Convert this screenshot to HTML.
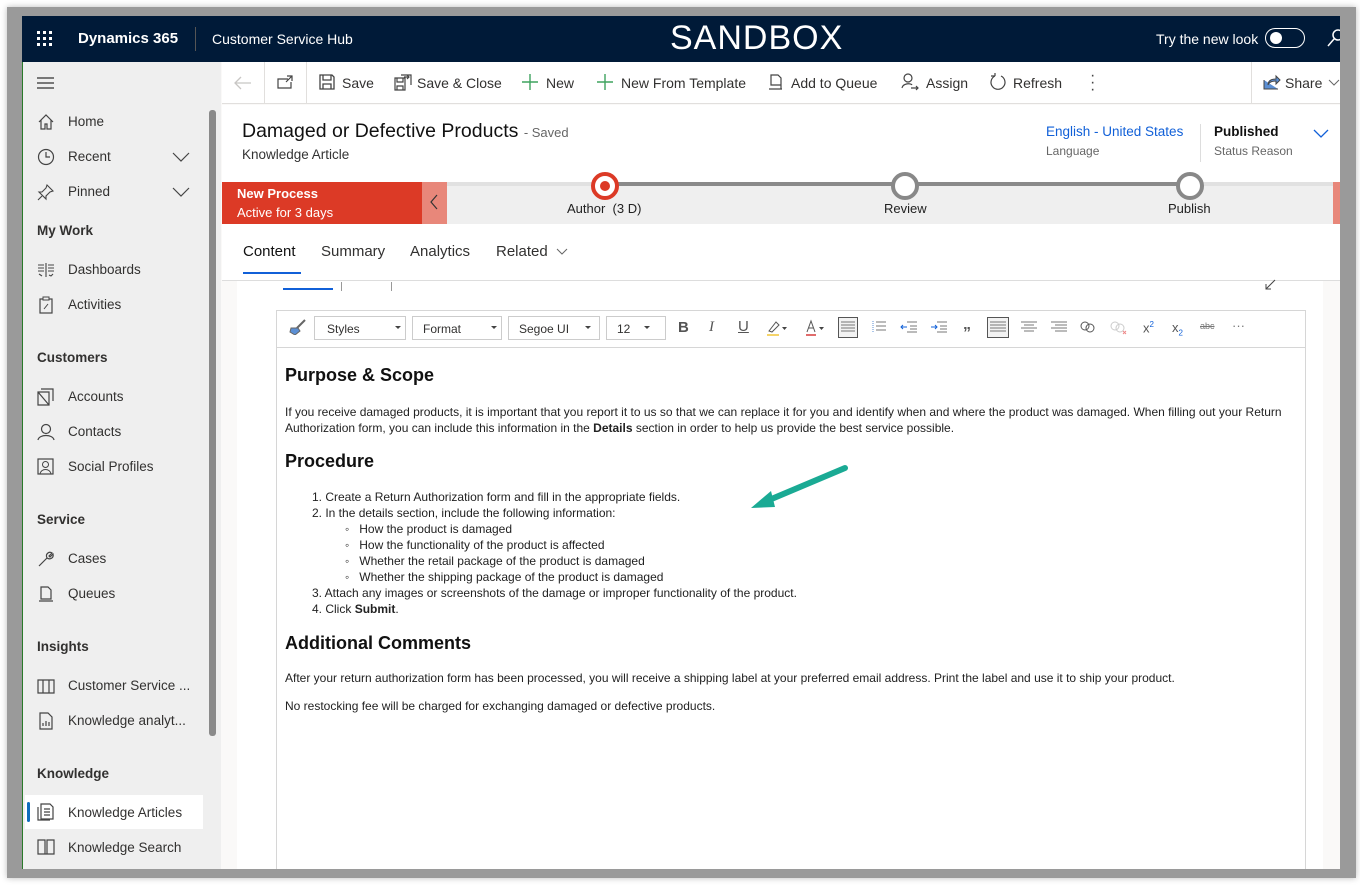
<!DOCTYPE html>
<html><head><meta charset="utf-8"><style>
*{box-sizing:border-box;margin:0;padding:0}
body{width:1360px;height:885px;background:#fff;font-family:"Liberation Sans",sans-serif;position:relative;overflow:hidden;color:#323130}
.a{position:absolute;white-space:nowrap}
.frame{position:absolute;left:7px;top:7px;width:1349px;height:871px;background:#9a9a9a;box-shadow:0 0 6px #bbb}
.app{position:absolute;left:22px;top:16px;width:1318px;height:853px;background:#faf9f8;overflow:hidden}
.top{position:absolute;left:0;top:0;width:1318px;height:46px;background:#001a38;color:#fff}
.side{position:absolute;left:0;top:46px;width:199px;height:807px;background:#efefef;border-left:1px solid #2a7a2a}
.si{position:absolute;left:45px;font-size:13.5px;color:#323130}
.sh{position:absolute;left:14px;font-size:13.5px;font-weight:bold;color:#323130}
.ic{position:absolute;left:14px;width:18px;height:18px}
.cmd{position:absolute;left:200px;top:46px;width:1118px;height:42px;background:#fff;border-bottom:1px solid #e1dfdd}
.cb{position:absolute;top:13px;font-size:14px;color:#323130}
.body{font-size:12px;color:#222}
</style></head><body>
<div class="frame"></div>
<div class="app">
 <div class="top">
  <svg class="a" style="left:15px;top:15px" width="16" height="16"><g fill="#fff"><rect x="0" y="0" width="3" height="3"/><rect x="6" y="0" width="3" height="3"/><rect x="12" y="0" width="3" height="3"/><rect x="0" y="6" width="3" height="3"/><rect x="6" y="6" width="3" height="3"/><rect x="12" y="6" width="3" height="3"/><rect x="0" y="12" width="3" height="3"/><rect x="6" y="12" width="3" height="3"/><rect x="12" y="12" width="3" height="3"/></g></svg>
  <div class="a" style="left:56px;top:14px;font-size:15px;font-weight:bold">Dynamics 365</div>
  <div class="a" style="left:173px;top:11px;width:1px;height:24px;background:#555"></div>
  <div class="a" style="left:190px;top:15px;font-size:14px">Customer Service Hub</div>
  <div class="a" style="left:648px;top:3px;font-size:34px;letter-spacing:1px">SANDBOX</div>
  <div class="a" style="left:1134px;top:15px;font-size:14px">Try the new look</div>
  <div class="a" style="left:1243px;top:12px;width:40px;height:20px;border:1.5px solid #fff;border-radius:10px"></div>
  <div class="a" style="left:1248px;top:16px;width:12px;height:12px;background:#fff;border-radius:50%"></div>
  <svg class="a" style="left:1305px;top:12px" width="16" height="20"><circle cx="11" cy="7" r="5" stroke="#fff" fill="none" stroke-width="1.5"/><path d="M7 11 L1 18" stroke="#fff" stroke-width="1.5"/></svg>
 </div>
 <div class="side">
  <svg class="a" style="left:14px;top:15px" width="17" height="12"><path d="M0 1h17M0 6h17M0 11h17" stroke="#323130" stroke-width="1.2"/></svg>
  <div class="a" style="left:186px;top:48px;width:7px;height:626px;background:#8a8a8a;border-radius:3px"></div>
  <svg class="ic" style="top:51px" viewBox="0 0 18 18"><path d="M2 9 L9 2 L16 9 M4 7 V16 H8 V11 H10 V16 H14 V7" fill="none" stroke="#444" stroke-width="1.2"/></svg>
  <div class="si" style="top:52px">Home</div>
  <svg class="ic" style="top:86px" viewBox="0 0 18 18"><circle cx="9" cy="9" r="7.5" fill="none" stroke="#444" stroke-width="1.2"/><path d="M9 4v5h4" fill="none" stroke="#444" stroke-width="1.2"/></svg>
  <div class="si" style="top:87px">Recent</div>
  <svg class="a" style="left:149px;top:90px" width="18" height="10"><path d="M1 1l8 8 8-8" fill="none" stroke="#444" stroke-width="1.2"/></svg>
  <svg class="ic" style="top:121px" viewBox="0 0 18 18"><path d="M10 2 L16 8 L13 9 L9 13 L9 16 L2 9 L5 9 L9 5 Z M5 13 L1 17" fill="none" stroke="#444" stroke-width="1.1"/></svg>
  <div class="si" style="top:122px">Pinned</div>
  <svg class="a" style="left:149px;top:125px" width="18" height="10"><path d="M1 1l8 8 8-8" fill="none" stroke="#444" stroke-width="1.2"/></svg>
  <div class="sh" style="top:161px">My Work</div>
  <svg class="ic" style="top:199px" viewBox="0 0 18 18"><path d="M1 4h6M1 7h6M1 10h6M9 2v14M11 4h6M11 7h6M11 10h6M2 13l3 2M12 14l2 1 2-2" fill="none" stroke="#444" stroke-width="1.1"/></svg>
  <div class="si" style="top:200px">Dashboards</div>
  <svg class="ic" style="top:234px" viewBox="0 0 18 18"><rect x="3" y="3" width="12" height="14" fill="none" stroke="#444" stroke-width="1.2"/><rect x="6" y="1" width="6" height="3" fill="#efefef" stroke="#444"/><path d="M7 13 L11 8" stroke="#444"/></svg>
  <div class="si" style="top:235px">Activities</div>
  <div class="sh" style="top:288px">Customers</div>
  <svg class="ic" style="top:326px" viewBox="0 0 18 18"><path d="M1 4h11v13H1zM4 1h12v12M1 4l11 13" fill="none" stroke="#444" stroke-width="1.2"/></svg>
  <div class="si" style="top:327px">Accounts</div>
  <svg class="ic" style="top:361px" viewBox="0 0 18 18"><circle cx="9" cy="6" r="4.5" fill="none" stroke="#444" stroke-width="1.2"/><path d="M1 17 C2 11 16 11 17 17" fill="none" stroke="#444" stroke-width="1.2"/></svg>
  <div class="si" style="top:362px">Contacts</div>
  <svg class="ic" style="top:396px" viewBox="0 0 18 18"><rect x="1" y="1" width="15" height="15" fill="none" stroke="#444" stroke-width="1.2"/><circle cx="8.5" cy="6.5" r="3" fill="none" stroke="#444"/><path d="M3 16 C4 10 13 10 14 16" fill="none" stroke="#444"/></svg>
  <div class="si" style="top:397px">Social Profiles</div>
  <div class="sh" style="top:450px">Service</div>
  <svg class="ic" style="top:488px" viewBox="0 0 18 18"><path d="M2 16 L10 8 M10 8 C8 4 12 1 15 3 L12 6 L13 7 L16 4 C17 8 13 10 10 8" fill="none" stroke="#444" stroke-width="1.2"/></svg>
  <div class="si" style="top:489px">Cases</div>
  <svg class="ic" style="top:523px" viewBox="0 0 18 18"><path d="M4 2h7l3 3v9H4zM2 16h14" fill="none" stroke="#444" stroke-width="1.2"/></svg>
  <div class="si" style="top:524px">Queues</div>
  <div class="sh" style="top:577px">Insights</div>
  <svg class="ic" style="top:615px" viewBox="0 0 18 18"><path d="M1 3h16v13H1zM6 3v13M12 3v13" fill="none" stroke="#444" stroke-width="1.2"/></svg>
  <div class="si" style="top:616px">Customer Service ...</div>
  <svg class="ic" style="top:650px" viewBox="0 0 18 18"><path d="M3 1h8l4 4v12H3zM6 14v-3M9 14v-5M12 14v-4" fill="none" stroke="#444" stroke-width="1.2"/></svg>
  <div class="si" style="top:651px">Knowledge analyt...</div>
  <div class="sh" style="top:704px">Knowledge</div>
  <div class="a" style="left:2px;top:733px;width:178px;height:34px;background:#fff"></div>
  <div class="a" style="left:4px;top:740px;width:3px;height:20px;background:#0f6cbd;border-radius:2px"></div>
  <svg class="ic" style="top:741px" viewBox="0 0 18 18"><path d="M4 1h9l3 3v12H4zM1 4v13h12M7 6h6M7 9h6M7 12h6" fill="none" stroke="#444" stroke-width="1.2"/></svg>
  <div class="si" style="top:743px">Knowledge Articles</div>
  <svg class="ic" style="top:776px" viewBox="0 0 18 18"><path d="M1 2h7v14H1zM10 2h7v14h-7zM8 16h2" fill="none" stroke="#444" stroke-width="1.2"/></svg>
  <div class="si" style="top:778px">Knowledge Search</div>
 </div>
 <div class="cmd">
  <div class="a" style="left:42px;top:0;width:1px;height:41px;background:#e1dfdd"></div>
  <div class="a" style="left:84px;top:0;width:1px;height:41px;background:#e1dfdd"></div>
  <svg class="a" style="left:12px;top:14px" width="18" height="14"><path d="M17 7H2M7 1L1 7l6 6" fill="none" stroke="#c8c6c4" stroke-width="1.3"/></svg>
  <svg class="a" style="left:55px;top:13px" width="16" height="14"><path d="M11 4H1v9h13V7M10 1h5v5M15 1l-6 6" fill="none" stroke="#444" stroke-width="1.2"/></svg>
  <svg class="a" style="left:97px;top:12px" width="16" height="16"><path d="M1 1h12l2 2v12H1zM4 1v5h8V1M4 15v-5h8v5" fill="none" stroke="#444" stroke-width="1.3"/></svg>
  <div class="cb" style="left:120px">Save</div>
  <svg class="a" style="left:172px;top:11px" width="18" height="18"><path d="M1 5h10v12H1zM3 5v4h6V5M3 17v-4h6v4M7 2h10v10M10 4h5M13 2l2 2-2 2" fill="none" stroke="#444" stroke-width="1.2"/></svg>
  <div class="cb" style="left:195px">Save &amp; Close</div>
  <svg class="a" style="left:300px;top:12px" width="16" height="16"><path d="M8 0v16M0 8h16" stroke="#3fa35f" stroke-width="1.4"/></svg>
  <div class="cb" style="left:324px">New</div>
  <svg class="a" style="left:375px;top:12px" width="16" height="16"><path d="M8 0v16M0 8h16" stroke="#3fa35f" stroke-width="1.4"/></svg>
  <div class="cb" style="left:399px">New From Template</div>
  <svg class="a" style="left:546px;top:12px" width="16" height="16"><path d="M3 1h7l3 3v7H3zM1 15h13M13 11v4" fill="none" stroke="#444" stroke-width="1.2"/></svg>
  <div class="cb" style="left:569px">Add to Queue</div>
  <svg class="a" style="left:679px;top:11px" width="18" height="18"><circle cx="7" cy="5" r="4" fill="none" stroke="#444" stroke-width="1.2"/><path d="M1 15C2 10 10 10 11 12M10 15h7M15 13l2 2-2 2" fill="none" stroke="#444" stroke-width="1.2"/></svg>
  <div class="cb" style="left:704px">Assign</div>
  <svg class="a" style="left:767px;top:11px" width="18" height="18"><path d="M6 3 A7 7 0 1 0 12 3M6 3V0M6 3H2" fill="none" stroke="#444" stroke-width="1.2"/></svg>
  <div class="cb" style="left:791px">Refresh</div>
  <div class="a" style="left:868px;top:10px;font-size:16px;color:#444;line-height:7px">·<br>·<br>·</div>
  <div class="a" style="left:1029px;top:0;width:1px;height:41px;background:#e1dfdd"></div>
  <svg class="a" style="left:1041px;top:12px" width="18" height="16"><path d="M1 6v9h14M5 11c0-5 4-6 8-6V2l4 4-4 4V7c-4 0-7 1-8 4z" fill="#5b8fd4" stroke="#444" stroke-width="1"/></svg>
  <div class="cb" style="left:1063px">Share</div>
  <svg class="a" style="left:1106px;top:17px" width="12" height="8"><path d="M1 1l5 5 5-5" fill="none" stroke="#666"/></svg>
 </div>
 <div class="a" style="left:200px;top:89px;width:1118px;height:77px;background:#fff"></div>
 <div class="a" style="left:220px;top:104px;font-size:19.5px;color:#111">Damaged or Defective Products <span style="font-size:13px;color:#666">- Saved</span></div>
 <div class="a" style="left:220px;top:131px;font-size:13.5px;color:#333">Knowledge Article</div>
 <div class="a" style="left:1024px;top:108px;font-size:13.5px;color:#1160d8">English - United States</div>
 <div class="a" style="left:1024px;top:128px;font-size:12px;color:#666">Language</div>
 <div class="a" style="left:1178px;top:108px;width:1px;height:38px;background:#ddd"></div>
 <div class="a" style="left:1192px;top:108px;font-size:13.5px;color:#111;font-weight:bold">Published</div>
 <div class="a" style="left:1192px;top:128px;font-size:12px;color:#666">Status Reason</div>
 <svg class="a" style="left:1291px;top:113px" width="16" height="10"><path d="M1 1l7 7 7-7" fill="none" stroke="#1160d8" stroke-width="1.3"/></svg>
 <div class="a" style="left:200px;top:166px;width:1118px;height:42px;background:#efefef"></div>
 <div class="a" style="left:200px;top:166px;width:1118px;height:4px;background:#e1e1e1"></div>
 <div class="a" style="left:583px;top:166px;width:585px;height:4px;background:#8a8a8a"></div>
 <div class="a" style="left:200px;top:166px;width:200px;height:42px;background:#dc3a26"></div>
 <div class="a" style="left:400px;top:166px;width:25px;height:42px;background:#e8877a"></div>
 <svg class="a" style="left:407px;top:178px" width="10" height="16"><path d="M8 1L2 8l6 7" fill="none" stroke="#333" stroke-width="1.2"/></svg>
 <div class="a" style="left:215px;top:170px;font-size:13px;color:#fff;font-weight:bold">New Process</div>
 <div class="a" style="left:215px;top:189px;font-size:13px;color:#fff">Active for 3 days</div>
 <div class="a" style="left:1311px;top:166px;width:7px;height:42px;background:#e8877a"></div>
 <div class="a" style="left:569px;top:156px;width:28px;height:28px;border-radius:50%;background:#fff;border:4px solid #dc3a26"></div>
 <div class="a" style="left:578px;top:165px;width:10px;height:10px;border-radius:50%;background:#dc3a26"></div>
 <div class="a" style="left:545px;top:185px;font-size:13px;color:#222">Author&nbsp; (3 D)</div>
 <div class="a" style="left:869px;top:156px;width:28px;height:28px;border-radius:50%;background:#fff;border:4px solid #888"></div>
 <div class="a" style="left:862px;top:185px;font-size:13px;color:#222">Review</div>
 <div class="a" style="left:1154px;top:156px;width:28px;height:28px;border-radius:50%;background:#fff;border:4px solid #888"></div>
 <div class="a" style="left:1146px;top:185px;font-size:13px;color:#222">Publish</div>
 <div class="a" style="left:200px;top:208px;width:1118px;height:57px;background:#fff;border-bottom:1px solid #ddd"></div>
 <div class="a" style="left:221px;top:227px;font-size:15px;color:#111">Content</div>
 <div class="a" style="left:221px;top:256px;width:58px;height:2px;background:#1160d8"></div>
 <div class="a" style="left:299px;top:227px;font-size:15px;color:#323130">Summary</div>
 <div class="a" style="left:388px;top:227px;font-size:15px;color:#323130">Analytics</div>
 <div class="a" style="left:474px;top:227px;font-size:15px;color:#323130">Related</div>
 <svg class="a" style="left:534px;top:232px" width="12" height="8"><path d="M1 1l5 5 5-5" fill="none" stroke="#666"/></svg>
 <div class="a" style="left:215px;top:265px;width:1086px;height:588px;background:#fff"></div>
 <div class="a" style="left:261px;top:272px;width:50px;height:2px;background:#1160d8"></div>
 <div class="a" style="left:319px;top:266px;width:1px;height:9px;background:#999"></div>
 <div class="a" style="left:369px;top:266px;width:1px;height:9px;background:#999"></div>
 <svg class="a" style="left:1243px;top:262px" width="12" height="12"><path d="M1 11l9-9M1 6v5h5" fill="none" stroke="#444"/></svg>
 <div class="a" style="left:254px;top:294px;width:1030px;height:570px;border:1px solid #d6d6d6;background:#fff"></div>
 <div class="a" style="left:255px;top:331px;width:1028px;height:1px;background:#d6d6d6"></div>
 <svg class="a" style="left:267px;top:303px" width="18" height="16"><path d="M16 1L8 9" stroke="#666" stroke-width="2"/><path d="M2 9h7l2 3-5 4-5-3z" fill="#5b8fd4" stroke="#666"/></svg>
 <div class="a" style="left:292px;top:300px;width:92px;height:24px;border:1px solid #ccc;font-size:12px;padding:5px 12px">Styles</div>
 <div class="a" style="left:390px;top:300px;width:90px;height:24px;border:1px solid #ccc;font-size:12px;padding:5px 10px">Format</div>
 <div class="a" style="left:486px;top:300px;width:92px;height:24px;border:1px solid #ccc;font-size:12px;padding:5px 10px">Segoe UI</div>
 <div class="a" style="left:584px;top:300px;width:60px;height:24px;border:1px solid #ccc;font-size:12px;padding:5px 10px">12</div>
 <svg class="a" style="left:292px;top:300px" width="360" height="24"><g fill="#444"><path d="M81 10h6l-3 3z"/><path d="M177 10h6l-3 3z"/><path d="M271 10h6l-3 3z"/><path d="M330 10h6l-3 3z"/></g></svg>
 <div class="a" style="left:656px;top:303px;font-size:15px;font-weight:bold;color:#555">B</div>
 <div class="a" style="left:687px;top:303px;font-size:15px;font-style:italic;color:#555;font-family:'Liberation Serif',serif">I</div>
 <div class="a" style="left:716px;top:302px;font-size:15px;text-decoration:underline;color:#555">U</div>
 <svg class="a" style="left:744px;top:303px" width="24" height="18"><path d="M3 12L10 3l3 3-7 7z" fill="none" stroke="#555"/><rect x="1" y="15" width="12" height="2" fill="#f5d46a"/><path d="M16 8h5l-2.5 3z" fill="#444"/></svg>
 <svg class="a" style="left:783px;top:303px" width="24" height="18"><path d="M2 13L6 2l4 11M3.5 9h5" fill="none" stroke="#555"/><rect x="1" y="15" width="10" height="2" fill="#e06c6c"/><path d="M14 8h5l-2.5 3z" fill="#444"/></svg>
 <div class="a" style="left:816px;top:301px;width:20px;height:21px;border:1px solid #555;background:#f2f2f2"></div>
 <svg class="a" style="left:819px;top:305px" width="14" height="12"><path d="M0 1h14M0 4h14M0 7h14M0 10h14" stroke="#777"/></svg>
 <svg class="a" style="left:850px;top:305px" width="14" height="12"><path d="M4 1h10M4 5h10M4 9h10" stroke="#777"/><path d="M1 0v11" stroke="#5b8fd4" stroke-dasharray="1 1"/></svg>
 <svg class="a" style="left:878px;top:305px" width="18" height="12"><path d="M7 1h10M10 5h7M10 8h7M7 11h10" stroke="#777"/><path d="M1 6h6M3 4l-2 2 2 2" stroke="#1160d8" fill="none"/></svg>
 <svg class="a" style="left:908px;top:305px" width="18" height="12"><path d="M7 1h10M10 5h7M10 8h7M7 11h10" stroke="#777"/><path d="M1 6h6M5 4l2 2-2 2" stroke="#1160d8" fill="none"/></svg>
 <div class="a" style="left:941px;top:300px;font-size:16px;font-weight:bold;color:#555">„</div>
 <div class="a" style="left:965px;top:301px;width:22px;height:21px;border:1px solid #555;background:#f2f2f2"></div>
 <svg class="a" style="left:968px;top:305px" width="16" height="12"><path d="M0 1h16M0 4h16M0 7h16M0 10h16" stroke="#777"/></svg>
 <svg class="a" style="left:999px;top:305px" width="16" height="12"><path d="M0 1h16M3 4h10M0 7h16M3 10h10" stroke="#777"/></svg>
 <svg class="a" style="left:1029px;top:305px" width="16" height="12"><path d="M0 1h16M4 4h12M0 7h16M4 10h12" stroke="#777"/></svg>
 <svg class="a" style="left:1058px;top:304px" width="16" height="14"><circle cx="5" cy="6" r="4" fill="none" stroke="#555"/><circle cx="10" cy="8" r="4" fill="none" stroke="#555"/></svg>
 <svg class="a" style="left:1088px;top:304px" width="18" height="16"><circle cx="5" cy="6" r="4" fill="none" stroke="#ccc"/><circle cx="10" cy="8" r="4" fill="none" stroke="#ccc"/><path d="M13 11l3 3M16 11l-3 3" stroke="#e88"/></svg>
 <div class="a" style="left:1121px;top:304px;font-size:13px;color:#555">x<sup style="font-size:8px;color:#1160d8">2</sup></div>
 <div class="a" style="left:1150px;top:304px;font-size:13px;color:#555">x<sub style="font-size:8px;color:#1160d8">2</sub></div>
 <div class="a" style="left:1178px;top:305px;font-size:9px;color:#777;text-decoration:line-through">abc</div>
 <div class="a" style="left:1210px;top:302px;font-size:13px;color:#777">···</div>
 <div class="a body" style="left:263px;top:349px;font-size:18px;font-weight:bold;color:#111">Purpose &amp; Scope</div>
 <div class="a body" style="left:263px;top:388px;line-height:16px">If you receive damaged products, it is important that you report it to us so that we can replace it for you and identify when and where the product was damaged. When filling out your Return<br>Authorization form, you can include this information in the <b>Details</b> section in order to help us provide the best service possible.</div>
 <div class="a body" style="left:263px;top:435px;font-size:18px;font-weight:bold;color:#111">Procedure</div>
 <div class="a body" style="left:290px;top:473px;line-height:16px">1. Create a Return Authorization form and fill in the appropriate fields.<br>2. In the details section, include the following information:</div>
 <div class="a body" style="left:323px;top:505px;line-height:16px">◦&nbsp;&nbsp; How the product is damaged<br>◦&nbsp;&nbsp; How the functionality of the product is affected<br>◦&nbsp;&nbsp; Whether the retail package of the product is damaged<br>◦&nbsp;&nbsp; Whether the shipping package of the product is damaged</div>
 <div class="a body" style="left:290px;top:569px;line-height:16px">3. Attach any images or screenshots of the damage or improper functionality of the product.<br>4. Click <b>Submit</b>.</div>
 <div class="a body" style="left:263px;top:617px;font-size:18px;font-weight:bold;color:#111">Additional Comments</div>
 <div class="a body" style="left:263px;top:655px">After your return authorization form has been processed, you will receive a shipping label at your preferred email address. Print the label and use it to ship your product.</div>
 <div class="a body" style="left:263px;top:683px">No restocking fee will be charged for exchanging damaged or defective products.</div>
 <svg class="a" style="left:725px;top:445px" width="105" height="50"><path d="M98 7 L15 42" stroke="#1aaa94" stroke-width="6" stroke-linecap="round"/><path d="M4 47 L24 30 L28 46 Z" fill="#1aaa94"/></svg>
</div>
</body></html>
